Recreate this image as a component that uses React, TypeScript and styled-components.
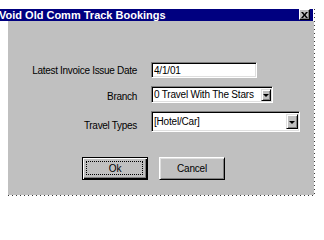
import React from 'react';
import styled, { createGlobalStyle } from 'styled-components';

const GlobalStyle = createGlobalStyle`
  html, body {
    margin: 0;
    padding: 0;
    background: #ffffff;
  }
  body {
    width: 324px;
    height: 204px;
    overflow: hidden;
    font-family: "Liberation Sans", Arial, sans-serif;
  }
`;

// Window frame with the dotted right / bottom edges of the capture
const Frame = styled.div`
  margin-top: 9px;
  width: 314px;
  padding-right: 1px;
  padding-bottom: 1px;
  background-image:
    repeating-linear-gradient(to bottom, #3a3a3a 0 1px, transparent 1px 4px),
    repeating-linear-gradient(to right, #3a3a3a 0 1px, transparent 1px 4px);
  background-size: 1px 100%, calc(100% - 8px) 1px;
  background-position: right top, right bottom;
  background-repeat: no-repeat;
`;

const TitleBar = styled.div`
  height: 12px;
  margin-right: 1px;
  background: #000080;
  display: flex;
  align-items: center;
  justify-content: space-between;
  padding-right: 3px;
`;

const Title = styled.span`
  margin-left: -1px;
  color: #ffffff;
  font-weight: bold;
  font-size: 11px;
  line-height: 12px;
  white-space: nowrap;
`;

const CloseButton = styled.div`
  width: 11px;
  height: 11px;
  box-sizing: border-box;
  margin-top: -1px;
  background: #c0c0c0;
  border: 1px solid;
  border-color: #ffffff #000000 #000000 #ffffff;
  box-shadow: inset -1px -1px #808080;
  display: flex;
  align-items: center;
  justify-content: center;
`;

const Body = styled.div`
  margin-left: 8px;
  height: 174px;
  background: #c0c0c0;
  padding-top: 41px;
  box-sizing: border-box;
`;

const FormGrid = styled.div`
  display: grid;
  grid-template-columns: 129px auto;
  column-gap: 14px;
  row-gap: 8px;
  justify-items: start;
  align-items: center;
`;

const Label = styled.label<{ $shift?: number }>`
  justify-self: end;
  font-size: 10px;
  letter-spacing: -0.3px;
  color: #000000;
  white-space: nowrap;
  position: relative;
  top: ${(p) => p.$shift ?? 0}px;
`;

const Sunken = styled.div<{ $w: number; $h: number }>`
  width: ${(p) => p.$w}px;
  height: ${(p) => p.$h}px;
  box-sizing: border-box;
  background: #ffffff;
  border: 1px solid;
  border-color: #808080 #ffffff #ffffff #808080;
  box-shadow: inset 1px 1px #000000, inset -1px -1px #dfdfdf;
  display: flex;
  align-items: center;
  padding: 0 1px 0 2px;
  overflow: hidden;
`;

const FieldText = styled.span`
  flex: 1;
  font-size: 10px;
  letter-spacing: -0.2px;
  color: #000000;
  white-space: nowrap;
  overflow: hidden;
`;

const ArrowButton = styled.div<{ $w: number; $h: number }>`
  width: ${(p) => p.$w}px;
  height: ${(p) => p.$h}px;
  flex: none;
  box-sizing: border-box;
  background: #c0c0c0;
  border: 1px solid;
  border-color: #dfdfdf #000000 #000000 #dfdfdf;
  box-shadow: inset 1px 1px #ffffff, inset -1px -1px #808080;
  display: flex;
  align-items: center;
  justify-content: center;
`;

const Arrow = styled.div`
  width: 0;
  height: 0;
  border-left: 3px solid transparent;
  border-right: 3px solid transparent;
  border-top: 3px solid #000000;
  margin-top: 1px;
`;

const ButtonRow = styled.div`
  display: flex;
  gap: 11px;
  margin-top: 25px;
  padding-left: 74px;
`;

const PushButton = styled.button<{ $default?: boolean }>`
  position: relative;
  width: 66px;
  height: 23px;
  box-sizing: border-box;
  padding: 0;
  background: #c0c0c0;
  font-family: "Liberation Sans", Arial, sans-serif;
  font-size: 10px;
  letter-spacing: -0.2px;
  color: #000000;
  border: 1px solid;
  border-color: ${(p) => (p.$default ? '#000000' : '#ffffff #000000 #000000 #ffffff')};
  box-shadow: ${(p) =>
    p.$default
      ? 'inset 1px 1px #ffffff, inset -1px -1px #000000, inset -2px -2px #808080'
      : 'inset 1px 1px #dfdfdf, inset -1px -1px #808080'};

  &::after {
    content: '';
    display: ${(p) => (p.$default ? 'block' : 'none')};
    position: absolute;
    inset: 3px 4px 4px 3px;
    border: 1px dotted #000000;
  }
`;

const App: React.FC = () => {
  return (
    <>
      <GlobalStyle />
      <Frame>
        <TitleBar>
          <Title>Void Old Comm Track Bookings</Title>
          <CloseButton>
            <svg width="7" height="6" viewBox="0 0 7 6">
              <path d="M0 0h2l1.5 2L5 0h2L4.5 3 7 6H5L3.5 4 2 6H0l2.5-3z" fill="#000" />
            </svg>
          </CloseButton>
        </TitleBar>
        <Body>
          <FormGrid>
            <Label>Latest Invoice Issue Date</Label>
            <Sunken $w={106} $h={16}>
              <FieldText>4/1/01</FieldText>
            </Sunken>

            <Label $shift={2}>Branch</Label>
            <Sunken $w={122} $h={17}>
              <FieldText>0 Travel With The Stars</FieldText>
              <ArrowButton $w={10} $h={12}>
                <Arrow />
              </ArrowButton>
            </Sunken>

            <Label $shift={4}>Travel Types</Label>
            <Sunken $w={149} $h={21}>
              <FieldText>[Hotel/Car]</FieldText>
              <ArrowButton $w={12} $h={15}>
                <Arrow />
              </ArrowButton>
            </Sunken>
          </FormGrid>

          <ButtonRow>
            <PushButton $default>Ok</PushButton>
            <PushButton>Cancel</PushButton>
          </ButtonRow>
        </Body>
      </Frame>
    </>
  );
};

export default App;
